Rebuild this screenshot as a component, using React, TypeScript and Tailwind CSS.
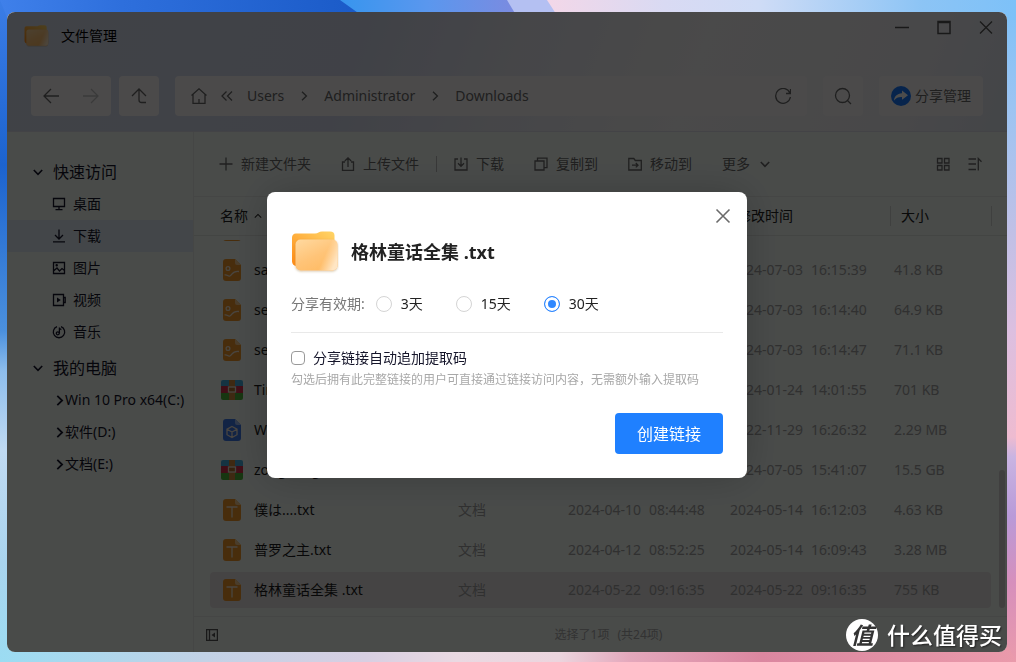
import { ReactNode, useEffect, useRef, useState } from "react";
import clsx from "clsx";

type FileKind = "image" | "zip" | "installer" | "text";

type FileEntry = {
  kind: FileKind;
  name: string;
  type?: string;
  created?: [string, string];
  modified?: [string, string];
  size?: string;
};

const files: FileEntry[] = [
  { kind: "image", name: "sa" },
  { kind: "image", name: "sa1", modified: ["2024-07-03", "16:15:39"], size: "41.8 KB" },
  { kind: "image", name: "se1", modified: ["2024-07-03", "16:14:40"], size: "64.9 KB" },
  { kind: "image", name: "se2", modified: ["2024-07-03", "16:14:47"], size: "71.1 KB" },
  { kind: "zip", name: "Tim", modified: ["2024-01-24", "14:01:55"], size: "701 KB" },
  { kind: "installer", name: "Win", modified: ["2022-11-29", "16:26:32"], size: "2.29 MB" },
  { kind: "zip", name: "zongheng", modified: ["2024-07-05", "15:41:07"], size: "15.5 GB" },
  { kind: "text", name: "僕は....txt", type: "文档", created: ["2024-04-10", "08:44:48"], modified: ["2024-05-14", "16:12:03"], size: "4.63 KB" },
  { kind: "text", name: "普罗之主.txt", type: "文档", created: ["2024-04-12", "08:52:25"], modified: ["2024-05-14", "16:09:43"], size: "3.28 MB" },
  { kind: "text", name: "格林童话全集 .txt", type: "文档", created: ["2024-05-22", "09:16:35"], modified: ["2024-05-22", "09:16:35"], size: "755 KB" },
];

const Icon = ({
  size = 14,
  box = 14,
  width = 1.3,
  className,
  children,
}: {
  size?: number;
  box?: number;
  width?: number;
  className?: string;
  children: ReactNode;
}) => (
  <svg
    width={size}
    height={size}
    viewBox={`0 0 ${box} ${box}`}
    fill="none"
    stroke="currentColor"
    strokeWidth={width}
    className={clsx("shrink-0", className)}
    aria-hidden="true"
  >
    {children}
  </svg>
);

const Chevron = ({ dir, size = 10, width = 1.6 }: { dir: "down" | "right" | "up"; size?: number; width?: number }) => (
  <Icon size={size} box={10} width={width}>
    {dir === "down" && <path d="M.8 3 5 7.4 9.2 3" />}
    {dir === "right" && <path d="M3 .8 7.4 5 3 9.2" />}
    {dir === "up" && <path d="M1 7 5 3l4 4" />}
  </Icon>
);

const Folder = ({ className }: { className: string }) => (
  <svg viewBox="0 0 48 44" className={className} aria-hidden="true">
    <defs>
      <linearGradient id="folderBack" x1="1" y1="0" x2="0" y2="1">
        <stop offset="0" stopColor="#ffd566" />
        <stop offset=".45" stopColor="#ffb545" />
        <stop offset="1" stopColor="#ff8a14" />
      </linearGradient>
      <linearGradient id="folderFront" x1="0" y1="0" x2=".6" y2="1">
        <stop offset="0" stopColor="#ffd9a0" />
        <stop offset=".6" stopColor="#ffc478" />
        <stop offset="1" stopColor="#ffbc66" />
      </linearGradient>
      <linearGradient id="folderEdge" x1=".7" y1=".5" x2="1" y2=".6">
        <stop offset="0" stopColor="#ffe6c4" stopOpacity="0" />
        <stop offset="1" stopColor="#ffe6c4" />
      </linearGradient>
      <filter id="folderShadow" x="-20%" y="-20%" width="140%" height="150%">
        <feDropShadow dx="0" dy="1" stdDeviation="1" floodColor="#8a5a20" floodOpacity=".35" />
      </filter>
    </defs>
    <path
      d="M5 3.5h19c3 0 4-2 7-2h8c3 0 4.500 1.500 4.500 4V36H6c-3 0-5-2-5-5V8c0-3 1.500-4.500 4-4.500z"
      fill="url(#folderBack)"
    />
    <rect x="4.500" y="9.500" width="42" height="31" rx="5" fill="url(#folderFront)" filter="url(#folderShadow)" />
    <rect x="4.500" y="9.500" width="42" height="31" rx="5" fill="url(#folderEdge)" />
  </svg>
);

const FileIcon = ({ kind }: { kind: FileKind }) => {
  if (kind === "zip") {
    return (
      <svg width="22" height="20" viewBox="0 0 22 20" aria-hidden="true">
        <path d="M2 0h18a2 2 0 0 1 2 2v5H0V2a2 2 0 0 1 2-2z" fill="#46aee0" />
        <path d="M0 6h22v7H0z" fill="#d7304f" />
        <path d="M0 13h22v5a2 2 0 0 1-2 2H2a2 2 0 0 1-2-2z" fill="#4fb53a" />
        <path d="M8 0h6v20H8z" fill="#cf8b3c" />
        <rect x="7.500" y="7" width="7" height="5" fill="#b0702c" stroke="#eee6d8" strokeWidth="1.300" />
      </svg>
    );
  }
  const isBlue = kind === "installer";
  return (
    <svg width="22" height="22" viewBox="0 0 22 22" aria-hidden="true">
      <path
        d="M5 0h9l6 6v13a3 3 0 0 1-3 3H5a3 3 0 0 1-3-3V3a3 3 0 0 1 3-3z"
        fill={isBlue ? "#3f78e8" : "#f0982a"}
      />
      <path d="M14 0l6 6h-4a2 2 0 0 1-2-2z" fill={isBlue ? "#9dbcf6" : "#f8cd90"} />
      <g fill="none" stroke="#f3e7d6" strokeWidth="1.300">
        {kind === "text" && <path d="M5.500 8h11M11 8v10.500" />}
        {kind === "image" && (
          <>
            <circle cx="7" cy="9.500" r="1.900" />
            <path d="M3.500 16c3-1 3 2 5.500 1s2-5.500 9-4.500" />
          </>
        )}
        {isBlue && <path d="m11 7.500 5 2.700v5.500L11 18.500l-5-2.800v-5.500zM6 10.200l5 2.800 5-2.800M11 13v5.500" />}
      </g>
    </svg>
  );
};

const quickAccess = [
  { label: "桌面", icon: <path d="M1.500 1.500h11v8h-11zM7 9.500v3M3.500 12.700h7" /> },
  { label: "下载", icon: <path d="M7 .5v9M3 6l4 4 4-4M1 12.800h12" /> },
  {
    label: "图片",
    icon: (
      <>
        <path d="M1.500 1.500h11v11h-11zM1.500 10l3.500-3 2.500 3L10 7.500l2.500 2" />
        <circle cx="4.700" cy="4.300" r=".6" />
      </>
    ),
  },
  {
    label: "视频",
    icon: (
      <>
        <path d="M1.500 1.500h10v11h-10zM11.500 4.500h1.700v5h-1.700" />
        <path d="M5 4.500 8.800 7 5 9.500z" fill="currentColor" stroke="none" />
      </>
    ),
  },
  {
    label: "音乐",
    icon: (
      <>
        <path d="M9 1.700a5.700 5.700 0 1 1-4 0" />
        <circle cx="5.800" cy="8.300" r="1.500" />
        <path d="M7.400 8.300V2.500c.2 1.200 1 1.900 2 2" />
      </>
    ),
  },
];

const drives = ["Win 10 Pro x64(C:)", "软件(D:)", "文档(E:)"];

const Wallpaper = () => (
  <svg
    className="absolute inset-0 h-full w-full"
    viewBox="0 0 1016 662"
    preserveAspectRatio="none"
    aria-hidden="true"
  >
    <defs>
      <linearGradient id="wallLeft" x1="0" y1="0" x2="0" y2="1">
        <stop offset="0" stopColor="#3b7de6" />
        <stop offset=".25" stopColor="#1c63cf" />
        <stop offset=".5" stopColor="#4b90dd" />
        <stop offset=".56" stopColor="#8dbdec" />
        <stop offset=".68" stopColor="#c0daf2" />
        <stop offset=".85" stopColor="#a9d4ee" />
        <stop offset="1" stopColor="#9bdcf2" />
      </linearGradient>
      <linearGradient id="wallTop">
        <stop offset="0" stopColor="#3f80ea" />
        <stop offset=".12" stopColor="#2e6fdc" />
        <stop offset=".35" stopColor="#1b5bc8" />
      </linearGradient>
      <linearGradient id="wallTopMid">
        <stop offset="0" stopColor="#3795ee" />
        <stop offset=".5" stopColor="#5a97ee" />
        <stop offset="1" stopColor="#7b8be0" />
      </linearGradient>
      <linearGradient id="wallTopRight">
        <stop offset="0" stopColor="#f3d7e8" />
        <stop offset=".25" stopColor="#d9daf3" />
        <stop offset=".45" stopColor="#cfdcf6" />
        <stop offset=".8" stopColor="#8cc4f5" />
        <stop offset="1" stopColor="#7dc1f8" />
      </linearGradient>
      <linearGradient id="wallRight" x1="0" y1="0" x2="0" y2="1">
        <stop offset="0" stopColor="#7dc1f8" />
        <stop offset=".16" stopColor="#9cc4f2" />
        <stop offset=".35" stopColor="#c0c0e6" />
        <stop offset=".5" stopColor="#dcbfe0" />
        <stop offset=".66" stopColor="#eebbd0" />
        <stop offset=".69" stopColor="#c9b4e2" />
        <stop offset=".78" stopColor="#b99ad8" />
        <stop offset=".88" stopColor="#d68fbc" />
        <stop offset="1" stopColor="#ea9aab" />
      </linearGradient>
      <linearGradient id="wallBottom">
        <stop offset="0" stopColor="#9bdcf2" />
        <stop offset=".2" stopColor="#c2d2e6" />
        <stop offset=".36" stopColor="#d8cfe2" />
        <stop offset=".45" stopColor="#ead9e2" />
        <stop offset=".55" stopColor="#ecd5de" />
        <stop offset=".62" stopColor="#e4a8bc" />
        <stop offset=".75" stopColor="#db87a0" />
        <stop offset="1" stopColor="#ea9aab" />
      </linearGradient>
    </defs>
    <path d="M0 0h508v662H0z" fill="url(#wallLeft)" />
    <path d="M508 0h508v662H508z" fill="url(#wallRight)" />
    <path d="M8 645h1000l8 17H0z" fill="url(#wallBottom)" />
    <path d="M0 0h1016l-10 20H8z" fill="url(#wallTop)" />
    <path d="M340 0h175v20H368z" fill="url(#wallTopMid)" />
    <path d="M507 0h50v20h-38z" fill="#b4c0f2" />
    <path d="M547 0h469v20H560z" fill="url(#wallTopRight)" />
  </svg>
);

const TitleBar = () => (
  <div className="flex h-12 items-center justify-between pl-[17px] pr-3">
    <div className="flex items-center gap-3">
      <Folder className="h-6 w-[25px]" />
      <h1 className="text-sm leading-5 text-black">文件管理</h1>
    </div>
    <div className="flex gap-6 pb-[18px] text-[#555]">
      <button aria-label="最小化">
        <Icon size={18} box={18}><path d="M2 9.500h14" /></Icon>
      </button>
      <button aria-label="最大化">
        <Icon size={18} box={18} width={1.500}><path d="M3 3.500h12v12H3zM3 4.500h12" /></Icon>
      </button>
      <button aria-label="关闭窗口">
        <Icon size={18} box={18}><path d="m3 3.500 12 12M15 3.500l-12 12" /></Icon>
      </button>
    </div>
  </div>
);

const AddressBar = () => (
  <div className="flex h-10 text-[#6a6a6a]">
    <div className="flex w-20 items-center justify-around rounded bg-[#fbf9f9]">
      <button aria-label="后退">
        <Icon size={18} box={18}><path d="M17 9H2M9 2 2 9l7 7" /></Icon>
      </button>
      <button aria-label="前进" className="text-[#c4c4c4]">
        <Icon size={18} box={18}><path d="M1 9h15M9 2l7 7-7 7" /></Icon>
      </button>
    </div>
    <button aria-label="上一级" className="ml-2 flex w-10 items-center justify-center rounded bg-[#fbf9f9]">
      <Icon size={18} box={18}><path d="M2 9l7-7 7 7M9 2v11c0 2 1 2.500 2.500 2.500H16" /></Icon>
    </button>
    <nav className="ml-4 flex flex-1 items-center rounded bg-[#fbf9f9] px-4 text-sm leading-5">
      <Icon size={16} box={16}><path d="M.5 7.500 8 .8l7.500 6.700M2 6.500v8.800h12V6.500M8 15.300V11" /></Icon>
      <span className="ml-3 flex w-4 justify-center">
        <Icon size={12} box={12}><path d="M5.500 1.500 1 6l4.500 4.500M11 1.500 6.500 6l4.500 4.500" /></Icon>
      </span>
      <a href="#users" className="ml-3">Users</a>
      <span className="mx-[15px]"><Chevron dir="right" width={1.400} /></span>
      <a href="#administrator">Administrator</a>
      <span className="mx-[15px]"><Chevron dir="right" width={1.400} /></span>
      <a href="#downloads">Downloads</a>
      <button aria-label="刷新" className="ml-auto">
        <Icon size={16} box={16}><path d="M15 5.200A7.400 7.400 0 1 0 15.400 9M15.500 1v4.500H11" /></Icon>
      </button>
    </nav>
    <button aria-label="搜索" className="ml-4 flex w-10 items-center justify-center rounded bg-[#fbf9f9]">
      <Icon size={18} box={18}><circle cx="8.500" cy="8.500" r="7" /><path d="m13.500 13.500 3.500 3.500" /></Icon>
    </button>
    <button className="ml-4 flex w-[104px] items-center justify-center gap-1 rounded bg-[#fbf9f9] text-sm leading-5">
      <svg width="20" height="20" viewBox="0 0 20 20" aria-hidden="true">
        <circle cx="10" cy="10" r="10" fill="#1a7bff" />
        <path d="M11 4.500 17 9.300l-6 4.500V11c-3.500-.2-6 .8-8 3.500.3-4 3-7 8-7.300z" fill="#fff" />
      </svg>
      分享管理
    </button>
  </div>
);

const Sidebar = () => (
  <aside className="w-[187px] shrink-0 border-r border-[#e8ece8] pt-6 text-sm text-[#15152a]">
    <button className="flex h-8 w-full items-center gap-[10px] pl-[26px] text-base">
      <Chevron dir="down" />
      快速访问
    </button>
    {quickAccess.map(({ label, icon }) => (
      <button
        key={label}
        className={clsx("flex h-8 w-full items-center gap-[7px] pl-[45px]", label === "下载" && "bg-[#e2ecf6]")}
      >
        <Icon>{icon}</Icon>
        {label}
      </button>
    ))}
    <button className="mt-1 flex h-8 w-full items-center gap-[10px] pl-[26px] text-base">
      <Chevron dir="down" />
      我的电脑
    </button>
    {drives.map((drive) => (
      <button key={drive} className="flex h-8 w-full items-center whitespace-nowrap pl-[47px]">
        <Chevron dir="right" size={11} />
        {drive}
      </button>
    ))}
  </aside>
);

const Action = ({ label, children }: { label: string; children: ReactNode }) => (
  <button className="flex items-center gap-2">
    {children}
    {label}
  </button>
);

const Toolbar = () => (
  <div className="flex h-16 shrink-0 items-center gap-[30px] pl-[25px] pr-[25px] text-sm leading-5 text-[#6a6a6a]">
    <Action label="新建文件夹">
      <Icon><path d="M7 .5v13M.5 7h13" /></Icon>
    </Action>
    <Action label="上传文件">
      <Icon><path d="M4 5H1.500v8.500h11V5H10M7 10V1M3.800 4 7 .9 10.200 4" /></Icon>
    </Action>
    <span className="-mx-[13px] h-4 w-px bg-[#bbb]" />
    <Action label="下载">
      <Icon><path d="M4 2H1v11h12V2h-3M7 .5V9M4 6.300l3 3 3-3" /></Icon>
    </Action>
    <Action label="复制到">
      <Icon><path d="M1 4h9v9H1zM3.500 3.500V1.200H13v9.500h-2.500" /></Icon>
    </Action>
    <Action label="移动到">
      <Icon><path d="M.8 1.500h5l1.500 2h6v9.500H.8zM4 8.200h6M7.800 6l2.200 2.200-2.200 2.200" /></Icon>
    </Action>
    <button className="flex items-center gap-[10px]">
      更多
      <Chevron dir="down" />
    </button>
    <div className="ml-auto flex gap-[18px]">
      <button aria-label="网格视图">
        <Icon><path d="M1.500 1.500H6V6H1.500zM8.500 1.500H13V6H8.500zM1.500 8.500H6V13H1.500zM8.500 8.500H13V13H8.500z" /></Icon>
      </button>
      <button aria-label="排序">
        <Icon><path d="M.5 2H8M.5 7H8M.5 12.500H8M10.300 13.500V1.500l3.200 3.300" /></Icon>
      </button>
    </div>
  </div>
);

const HeadCell = ({ children }: { children?: ReactNode }) => (
  <div className="flex h-5 items-center border-l border-[#d4d8d4] pl-[10px]">{children}</div>
);

const Stamp = ({ value }: { value?: [string, string] }) =>
  value ? (
    <span className="flex gap-2 whitespace-nowrap">
      <span>{value[0]}</span>
      <span>{value[1]}</span>
    </span>
  ) : null;

const FileTable = () => {
  const list = useRef<HTMLDivElement>(null);

  // open at the end of the list, where the selected file is
  useEffect(() => {
    if (list.current) list.current.scrollTop = list.current.scrollHeight;
  }, []);

  return (
    <div className="relative min-h-0 flex-1 border-y border-[#e6eae6]">
      <div ref={list} className="h-full overflow-y-auto pb-[6px] [scrollbar-width:none]">
        <table className="w-full table-fixed border-separate border-spacing-0 text-left text-sm leading-5">
          <colgroup>
            <col />
            <col className="w-[110px]" />
            <col className="w-[162px]" />
            <col className="w-[164px]" />
            <col className="w-[101px]" />
            <col className="w-4" />
          </colgroup>
          <thead className="sticky top-0 z-10 bg-[#f5fbf6] text-[#222]">
            <tr className="h-[39px] *:border-b *:border-[#e2e6e2] *:p-0 *:font-normal">
              <th>
                <span className="flex items-center gap-[6px] pl-[26px]">
                  名称
                  <Chevron dir="up" size={8} width={1.300} />
                </span>
              </th>
              <th><HeadCell /></th>
              <th><HeadCell /></th>
              <th><HeadCell>修改时间</HeadCell></th>
              <th><HeadCell>大小</HeadCell></th>
              <th><HeadCell /></th>
            </tr>
            <tr className="h-1">
              <td colSpan={6} className="p-0" />
            </tr>
          </thead>
          <tbody className="text-[#a2a2a2]">
            {files.map((file) => {
              const cell = clsx("flex h-9 items-center pl-1", file.name === "格林童话全集 .txt" && "bg-[#e8e4e4]");
              return (
                <tr key={file.name} className="h-10 *:px-0 *:py-[2px]">
                  <td>
                    <div className={clsx(cell, "ml-4 gap-[11px] rounded-l pl-[11px] text-[#1c1c1c]")}>
                      <FileIcon kind={file.kind} />
                      {file.name}
                    </div>
                  </td>
                  <td><div className={cell}>{file.type}</div></td>
                  <td><div className={cell}><Stamp value={file.created} /></div></td>
                  <td><div className={cell}><Stamp value={file.modified} /></div></td>
                  <td><div className={clsx(cell, "rounded-r")}>{file.size}</div></td>
                  <td />
                </tr>
              );
            })}
          </tbody>
        </table>
      </div>
      <div className="absolute bottom-2 right-0.5 h-[138px] w-1.5 rounded-full bg-[#d8d4d4]" />
    </div>
  );
};

const ShareDialog = () => {
  const [days, setDays] = useState(30);

  return (
    <div
      role="dialog"
      aria-labelledby="share-title"
      className="relative w-[480px] rounded-lg bg-white px-6 pb-6 pt-9 shadow-[0_0_40px_rgba(0,0,0,0.2)]"
    >
      <button aria-label="关闭" className="absolute right-4 top-4 text-[#6b6b6b]">
        <Icon size={16} box={16} width={1.600}><path d="m1.500 1.500 13 13M14.500 1.500l-13 13" /></Icon>
      </button>
      <div className="flex h-12 items-center gap-3">
        <Folder className="h-11 w-12" />
        <h2 id="share-title" className="text-lg font-bold leading-6 text-[#222]">格林童话全集 .txt</h2>
      </div>
      <fieldset className="mt-3 flex h-8 items-center text-sm leading-5 text-[#222]">
        <span className="mr-[11px] text-[#777]">分享有效期:</span>
        <div className="flex gap-[33px]">
          {[3, 15, 30].map((n) => (
            <label key={n} className="flex items-center gap-[9px]">
              <input
                type="radio"
                name="days"
                checked={days === n}
                onChange={() => setDays(n)}
                className="size-4 appearance-none rounded-full border border-[#d4d4d4] bg-white checked:border-[#2f88ff] checked:bg-[#2f88ff] checked:shadow-[inset_0_0_0_3px_#fff]"
              />
              {n}天
            </label>
          ))}
        </div>
      </fieldset>
      <hr className="mt-3 border-[#e9e9e9]" />
      <label className="mt-[14px] flex h-[22px] items-center gap-2 text-sm leading-5 text-[#15152a]">
        <input type="checkbox" className="size-[14px] appearance-none rounded-sm border border-[#999] bg-white checked:bg-[#1f80ff]" />
        分享链接自动追加提取码
      </label>
      <p className="text-xs leading-[22px] text-[#a8a8a8]">
        勾选后拥有此完整链接的用户可直接通过链接访问内容，无需额外输入提取码
      </p>
      <button className="ml-auto mt-[22px] block h-[41px] w-[108px] rounded bg-[#1f80ff] text-base text-white">
        创建链接
      </button>
    </div>
  );
};

const Watermark = () => (
  <div className="absolute bottom-[11px] right-[14px] z-30 flex items-center gap-[9px] text-[23px] leading-8 text-white">
    <span className="flex size-8 items-center justify-center rounded-full bg-white font-bold italic text-[#333]">
      值
    </span>
    <span className="font-medium [text-shadow:1px_1px_2px_rgba(0,0,0,0.6)]">什么值得买</span>
  </div>
);

export default function App() {
  return (
    <div className="relative flex h-screen overflow-hidden pb-[10px] pl-[7px] pr-[9px] pt-3 font-['Noto_Sans','Noto_Sans_CJK_SC',sans-serif]">
      <Wallpaper />
      <main className="relative flex flex-1 flex-col overflow-hidden rounded-lg bg-[#f5fbf6]">
        <header className="h-[120px] border-b border-[#e2e0ec] bg-[linear-gradient(110deg,#d8deec_0%,#d6dbee_35%,#e9eaf2_50%,#f8f7f7_68%,#f1f0f5_90%,#e2e9f1_100%)]">
          <TitleBar />
          <div className="px-6 pt-4">
            <AddressBar />
          </div>
        </header>
        <div className="flex min-h-0 flex-1">
          <Sidebar />
          <section className="flex min-w-0 flex-1 flex-col">
            <Toolbar />
            <FileTable />
            <footer className="flex h-[35px] shrink-0 items-center pl-3 pr-2 text-xs text-[#aaa]">
              <button aria-label="收起侧栏" className="text-[#555]">
                <Icon size={12} box={12}>
                  <path d="M.6.6h10.800v10.800H.6zM3.500.6v10.800" />
                  <path d="M9 3.500v5L5.500 6z" fill="currentColor" stroke="none" />
                </Icon>
              </button>
              <p className="flex flex-1 justify-center gap-2">
                <span>选择了1项</span>
                <span>(共24项)</span>
              </p>
            </footer>
          </section>
        </div>
        <div className="absolute inset-0 z-20 flex items-center justify-center bg-black/70 pt-1.5">
          <ShareDialog />
        </div>
      </main>
      <Watermark />
    </div>
  );
}
